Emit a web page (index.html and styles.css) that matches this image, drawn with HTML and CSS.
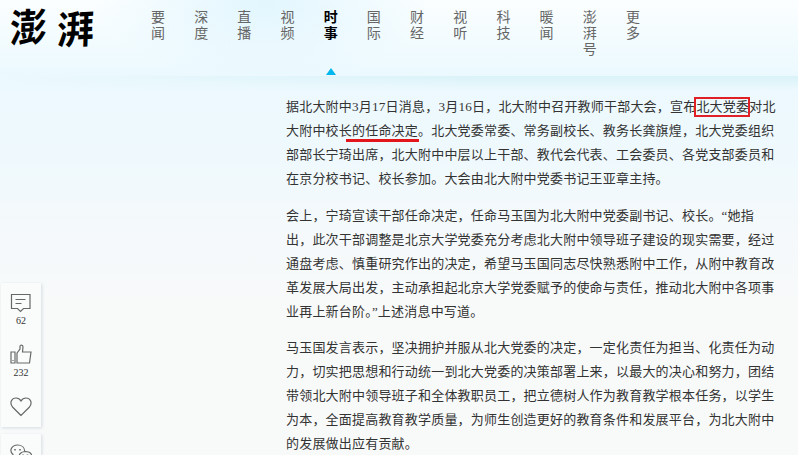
FILE: index.html
```
<!DOCTYPE html>
<html lang="zh-CN">
<head>
<meta charset="utf-8">
<title>澎湃</title>
<link rel="stylesheet" href="styles.css">
</head>
<body>
<header class="header">
  <div class="logo"><span>澎</span><span class="second">湃</span></div>
  <nav class="nav">
    <a>要闻</a><a>深度</a><a>直播</a><a>视频</a><a class="active">时事</a><a>国际</a><a>财经</a><a>视听</a><a>科技</a><a>暖闻</a><a>澎湃号</a><a>更多</a>
  </nav>
</header>
<main class="main">
  <aside class="side">
    <div class="panel">
      <div class="tool comment">
        <svg width="22" height="20" viewBox="0 0 22 20"><path d="M1.500 1.500h18.500v14h-6.500l-3 3-3-3h-6zM5.500 6.500h10M5.500 10.500h6"/></svg>
        <span>62</span>
      </div>
      <div class="tool like">
        <svg width="22" height="20" viewBox="0 0 22 20"><path d="M1 8h4v11H1zM7 9l3-4V2.500c0-2 3-2 3 .5l-.5 5H21l-1.500 11H7zM3 16v1"/></svg>
        <span>232</span>
      </div>
      <div class="tool heart">
        <svg width="22" height="20" viewBox="0 0 22 20"><path d="M11 18.500L2.500 10C-1 5.500 2 1 6 1c2.500 0 4 1.300 5 3 1-1.700 2.500-3 5-3 4 0 7 4.500 3.500 9z"/></svg>
      </div>
    </div>
    <div class="panel">
      <div class="tool wechat">
        <svg width="22" height="20" viewBox="0 0 22 20"><path d="M9 12.500c-1 .2-2.500 0-3.500-.5L2.500 13.500l.5-3C-1.500 6.500 2 1 7.500 1c4 0 7 2.500 7.200 6M15 7.500c9 0 8 8.500 4 9.500l.3 2-2.300-1.200C8 19 6 8 15 7.500z"/><path class="eyes" d="M5 5v1.500M10 5v1.500M13 10.500v1M17.500 10.500v1"/></svg>
      </div>
    </div>
  </aside>
  <article class="article">
    <p>据北大附中<span class="num">3</span>月<span class="num">17</span>日消息，<span class="num">3</span>月<span class="num">16</span>日，北大附中召开教师干部大会，宣布<span class="boxed">北大党委</span>对北<br>大附中校<span class="marked">长的任命决定</span>。北大党委常委、常务副校长、教务长龚旗煌，北大党委组织<br>部部长宁琦出席，北大附中中层以上干部、教代会代表、工会委员、各党支部委员和<br>在京分校书记、校长参加。大会由北大附中党委书记王亚章主持。</p>
    <p>会上，宁琦宣读干部任命决定，任命马玉国为北大附中党委副书记、校长。“她指<br>出，此次干部调整是北京大学党委充分考虑北大附中领导班子建设的现实需要，经过<br>通盘考虑、慎重研究作出的决定，希望马玉国同志尽快熟悉附中工作，从附中教育改<br>革发展大局出发，主动承担起北京大学党委赋予的使命与责任，推动北大附中各项事<br>业再上新台阶。”上述消息中写道。</p>
    <p>马玉国发言表示，坚决拥护并服从北大党委的决定，一定化责任为担当、化责任为动<br>力，切实把思想和行动统一到北大党委的决策部署上来，以最大的决心和努力，团结<br>带领北大附中领导班子和全体教职员工，把立德树人作为教育教学根本任务，以学生<br>为本，全面提高教育教学质量，为师生创造更好的教育条件和发展平台，为北大附中<br>的发展做出应有贡献。</p>
  </article>
</main>
</body>
</html>
```
FILE: styles.css
```
* { box-sizing: border-box; }
body {
  margin: 0;
  height: 455px;
  overflow: hidden;
  font-family: "Liberation Serif", "Noto Sans CJK SC", serif;
  color: #333;
  background: #f8fafa;
}
.header {
  display: flex;
  height: 76px;
  background:
    radial-gradient(ellipse 170px 75px at 265px 5px, #e2f6fe, rgba(226, 246, 254, 0)),
    linear-gradient(#fbfeff, #ebf9fe);
}
.logo {
  display: flex;
  gap: 10px;
  width: 137px;
  padding: 0 0 0 10px;
  font: 700 37px/50px "Noto Sans CJK SC", sans-serif;
  color: #000;
}
.logo span { height: 56px; transform: skew(-2deg, -3deg) scaleY(1.06); }
.logo .second { padding-top: 2px; }
.nav { display: flex; padding-top: 8px; }
.nav a {
  position: relative;
  width: 43.18px;
  padding: 0 14px;
  font: 14px/16px "Noto Sans CJK SC", sans-serif;
  color: #666;
  word-break: break-all;
}
.nav .active { color: #000; font-weight: 700; }
.nav .active::after {
  content: "";
  position: absolute;
  left: 16px;
  top: 60px;
  border: 5px solid transparent;
  border-top: 0;
  border-bottom: 7px solid #00b7ee;
}
.main {
  display: flex;
  height: 379px;
  overflow: hidden;
  background:
    linear-gradient(90deg, rgba(236, 249, 254, 1), rgba(236, 249, 254, 0) 60%) 0 0 / 100% 14px no-repeat,
    linear-gradient(#d9f2f8, rgba(236, 249, 254, 0)) 0 0 / 100% 14px no-repeat,
    linear-gradient(#ecf9fe 0, #eff9fd 80px, #f5f9fb 160px, #f8fafa 230px);
}
.side {
  display: flex;
  flex-direction: column;
  gap: 7px;
  width: 286px;
  padding: 207px 0 0 1px;
}
.panel {
  flex: none;
  width: 40px;
  height: 144px;
  background: #fafcfc;
  box-shadow: 1px 1px 3px rgba(130, 145, 160, .28);
}
.panel:last-child { height: 21px; }
.tool {
  display: flex;
  flex-direction: column;
  align-items: center;
  font-size: 10px;
  line-height: 12px;
  height: 52px;
  padding-top: 10px;
}
.tool svg {
  display: block;
  flex: none;
  fill: none;
  stroke: #686868;
  stroke-width: 1.2;
}
.tool .eyes { stroke-width: 1.6; }
.comment span { margin-top: 2px; }
.like { padding-top: 9px; }
.like span { margin-top: 3px; }
.article {
  padding-top: 19px;
  white-space: nowrap;
  font-size: 13px;
  line-height: 24px;
  letter-spacing: .2px;
}
.num { font-size: 13.200px; }
.article p { margin: 0 0 12.500px; }
.boxed { position: relative; }
.boxed::after {
  content: "";
  position: absolute;
  inset: -2px -1px -3px -2px;
  border: 2px solid #e01f26;
}
.marked { position: relative; }
.marked::after {
  content: "";
  position: absolute;
  left: 7px;
  right: -1px;
  bottom: -4px;
  height: 3px;
  background: #e3171b;
}
```
